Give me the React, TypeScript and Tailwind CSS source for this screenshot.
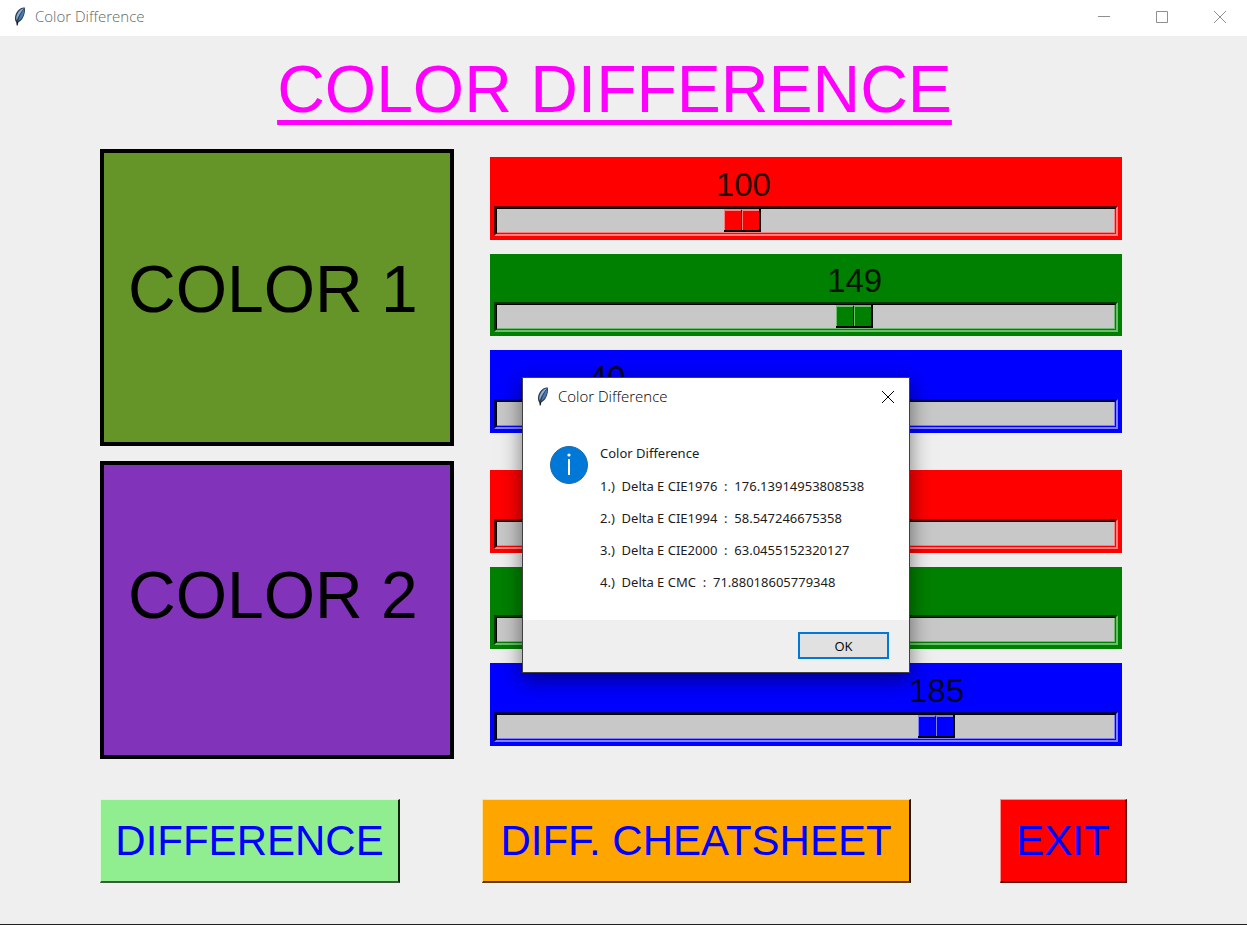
import { useState } from "react";

function Feather() {
  return (
    <svg viewBox="0 0 16 22" className="h-[22px] w-4 shrink-0" aria-hidden="true">
      <path d="M4.600 16.500C1.800 14 2.800 8 6 4.400 8.200 2 11 1 12.800 1.600c.8 3-.2 8-2.400 11.200-1.400 2-3.200 3.400-5.800 3.700Z" fill="#2c3e58" />
      <path d="M4.600 14.500C3.400 11 5.500 6 9 3.400c1-.7 2-1 3-.9-2.600 2.700-5.600 7-7.400 12Z" fill="#8fb0d2" />
      <path d="M12.200 3c.3 4-1.400 9-5.900 12C7.200 11 9.300 6.600 12.200 3Z" fill="#4a7ab2" />
      <path d="M4.300 12.500c-.6 2 .2 3.500 1.500 3.500l2.500-1.500-2 1.900-.6 3.100h-1l-.4-3.500Z" fill="#161c26" />
    </svg>
  );
}

type Tone = {
  box: string;
  light: string;
  dark: string;
  base: string;
  handle: string;
};

const red: Tone = {
  box: "bg-[#ff0000]",
  light: "border-r-[#ff7f7f] border-b-[#ff7f7f]",
  dark: "border-t-[#5c0000] border-l-[#5c0000]",
  base: "border-r-[#ff0000] border-b-[#ff0000]",
  handle: "border-t-[#ff7f7f] border-l-[#ff7f7f]",
};
const green: Tone = {
  box: "bg-[#008000]",
  light: "border-r-[#6cbd6c] border-b-[#6cbd6c]",
  dark: "border-t-[#003800] border-l-[#003800]",
  base: "border-r-[#008000] border-b-[#008000]",
  handle: "border-t-[#6cbd6c] border-l-[#6cbd6c]",
};
const blue: Tone = {
  box: "bg-[#0000ff]",
  light: "border-r-[#7f7fff] border-b-[#7f7fff]",
  dark: "border-t-[#00005c] border-l-[#00005c]",
  base: "border-r-[#0000ff] border-b-[#0000ff]",
  handle: "border-t-[#7f7fff] border-l-[#7f7fff]",
};

function Scale({ label, tone, start }: { label: string; tone: Tone; start: number }) {
  const [value, setValue] = useState(start);
  const offset = { marginLeft: `calc((100% - 37px) * ${value / 255})` };
  return (
    <div className={`flex flex-col justify-end px-1 pb-1 ${tone.box}`}>
      <div className="flex px-1">
        <output style={offset} className="flex w-[37px] justify-center pb-0.5 text-[33px] leading-[38px] text-black/85">
          {value}
        </output>
      </div>
      <div className={`relative h-[30px] border-2 ${tone.dark} ${tone.light}`}>
        <div className={`h-full border border-t-black border-l-black ${tone.base}`}>
          <div className={`h-full border-r border-b bg-[#c8c8c8] ${tone.light}`}>
            <div style={offset} className={`flex h-full w-[37px] border-r-2 border-b-2 border-r-black border-b-black ${tone.box}`}>
              <span className={`flex-1 border-t-2 border-r border-l ${tone.handle} border-r-black`} />
              <span className={`flex-1 border-t-2 border-l ${tone.handle}`} />
            </div>
          </div>
        </div>
        <input
          type="range"
          aria-label={label}
          min={0}
          max={255}
          value={value}
          onChange={(e) => setValue(Number(e.target.value))}
          className="absolute inset-0 h-full w-full cursor-pointer opacity-0"
        />
      </div>
    </div>
  );
}

const results = [
  "1.)  Delta E CIE1976  :  176.13914953808538",
  "2.)  Delta E CIE1994  :  58.547246675358",
  "3.)  Delta E CIE2000  :  63.0455152320127",
  "4.)  Delta E CMC  :  71.88018605779348",
];

const action = "h-[84px] border-t border-r-2 border-b-2 border-l text-[42px] leading-[48px] whitespace-nowrap text-[#0000ff]";

export default function App() {
  const [open, setOpen] = useState(true);
  return (
    <div className="relative flex min-h-screen flex-col border-b border-[#202020] bg-[#efefef] font-['Liberation_Sans',Arial,sans-serif] text-black">
      <header className="flex h-9 items-center bg-white pr-[21px] pb-0.5 pl-3 text-[#8f8f8f]">
        <Feather />
        <span className="ml-[7px] flex-1 pb-0.5 font-['Open_Sans','Noto_Sans',sans-serif] text-[15px] leading-5 font-light text-[#666666]">Color Difference</span>
        <div className="flex items-center gap-[46px]">
          <button aria-label="Minimize">
            <svg viewBox="0 0 12 12" className="size-3"><path d="M0 5.500h12" stroke="currentColor" /></svg>
          </button>
          <button aria-label="Maximize">
            <svg viewBox="0 0 12 12" className="size-3"><path d="M.5.5h11v11H.5z" fill="none" stroke="currentColor" /></svg>
          </button>
          <button aria-label="Close">
            <svg viewBox="0 0 12 12" className="size-3"><path d="m0 0 12 12M12 0 0 12" stroke="currentColor" /></svg>
          </button>
        </div>
      </header>

      <h1 className="mt-[15px] mr-[18px] mb-[22px] text-center text-[66px] leading-[76px] whitespace-nowrap text-[#ff00ff] underline decoration-[5px] underline-offset-8">
        COLOR DIFFERENCE
      </h1>

      <main className="grid grid-cols-[354fr_633fr] gap-x-9 gap-y-[15px] pr-[125px] pl-[100px]">
        <div className="flex h-[297px] items-center border-4 border-black bg-[#659528] pb-[18px] pl-6 text-[66px] leading-[76px] whitespace-nowrap">
          COLOR 1
        </div>
        <div className="mt-2 grid h-[276px] grid-rows-3 gap-y-3.5">
          <Scale label="Color 1 red" tone={red} start={100} />
          <Scale label="Color 1 green" tone={green} start={149} />
          <Scale label="Color 1 blue" tone={blue} start={40} />
        </div>
        <div className="flex h-[298px] items-center border-4 border-black bg-[#8134b9] pb-[30px] pl-6 text-[66px] leading-[76px] whitespace-nowrap">
          COLOR 2
        </div>
        <div className="mt-[9px] grid h-[276px] grid-rows-3 gap-y-3.5">
          <Scale label="Color 2 red" tone={red} start={129} />
          <Scale label="Color 2 green" tone={green} start={52} />
          <Scale label="Color 2 blue" tone={blue} start={185} />
        </div>
      </main>

      <footer className="flex gap-[82px] pt-10 pr-[120px] pb-[41px] pl-[100px]">
        <button onClick={() => setOpen(true)} className={`${action} w-[300px] border-t-[#d8f8d8] border-r-[#14200f] border-b-[#3a5c3a] border-l-[#d8f8d8] bg-[#90ee90]`}>
          DIFFERENCE
        </button>
        <button className={`${action} w-[429px] border-t-[#ffdf9c] border-r-[#1c1200] border-b-[#5c3c00] border-l-[#ffdf9c] bg-[#ffa500]`}>
          DIFF. CHEATSHEET
        </button>
        <button className={`${action} ml-auto w-[127px] border-t-[#ff8f8f] border-r-[#5c0000] border-b-[#5c0000] border-l-[#ff8f8f] bg-[#ff0000]`}>
          EXIT
        </button>
      </footer>

      {open && (
        <section
          role="dialog"
          aria-label="Color Difference"
          className="absolute top-[377px] left-[522px] w-[388px] border border-[#404040] bg-white font-['Open_Sans','Noto_Sans',sans-serif] shadow-[0_6px_20px_rgba(0,0,0,0.5)]"
        >
          <div className="flex h-[38px] items-center pr-[15px] pl-3">
            <Feather />
            <h2 className="ml-[7px] flex-1 pb-0.5 text-[15px] leading-5 font-light">Color Difference</h2>
            <button aria-label="Close" onClick={() => setOpen(false)}>
              <svg viewBox="0 0 12 12" className="size-3"><path d="m0 0 12 12M12 0 0 12" stroke="currentColor" /></svg>
            </button>
          </div>
          <div className="flex gap-3 px-[27px] pt-[21px] pb-[22px] font-['Noto_Sans','Open_Sans',sans-serif] text-[13px] text-[#1c1c1c]">
            <svg viewBox="0 0 38 38" className="mt-[9px] size-[38px] shrink-0" aria-hidden="true">
              <circle cx="19" cy="19" r="18.500" fill="#0078d7" stroke="#1c68a8" />
              <path d="M19 13v16" stroke="#fff" strokeWidth="2" />
              <circle cx="19" cy="9" r="1.600" fill="#fff" />
            </svg>
            <div className="leading-8 whitespace-pre">
              <p className="mb-px">Color Difference</p>
              {results.map((line) => (
                <p key={line}>{line}</p>
              ))}
            </div>
          </div>
          <div className="flex justify-end bg-[#efefef] px-5 pt-3 pb-[13px]">
            <button onClick={() => setOpen(false)} className="h-[27px] w-[91px] border-2 border-[#0078d7] bg-[#e1e1e1] text-[13px] leading-5">
              OK
            </button>
          </div>
        </section>
      )}
    </div>
  );
}
